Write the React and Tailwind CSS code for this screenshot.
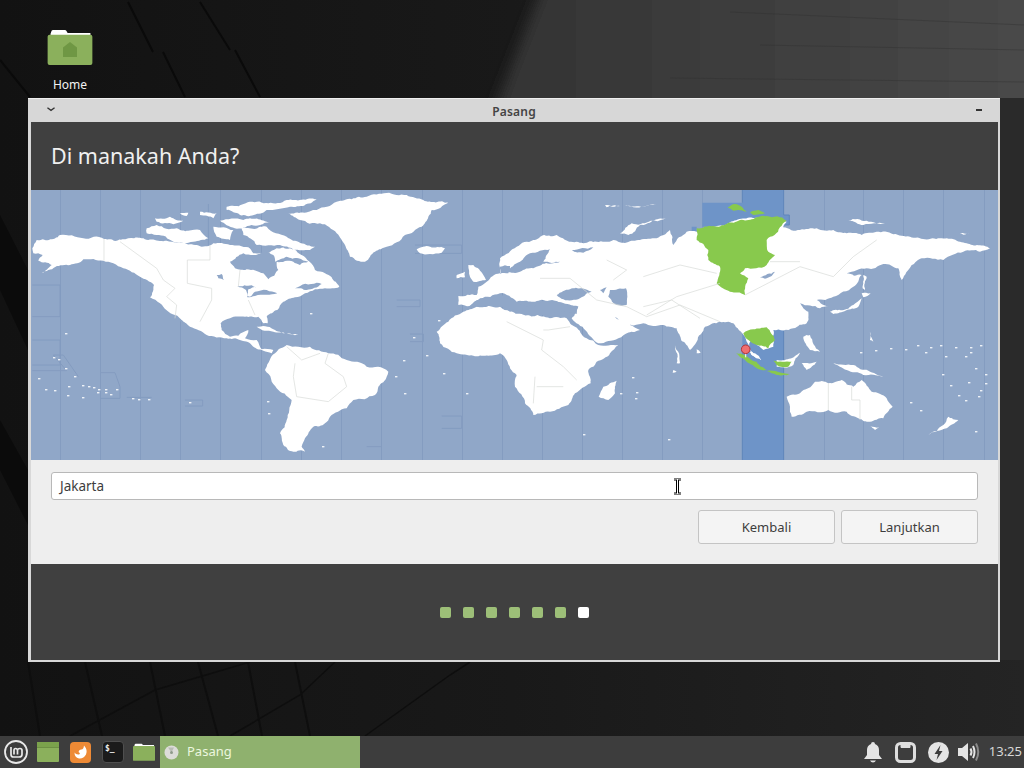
const font = { fontFamily: '"Noto Sans", "Open Sans", sans-serif' }

const TZ_LINES = [60, 100, 140, 180, 220, 261, 301, 341, 381, 422, 462, 502, 542, 582, 622, 662, 702, 824, 863, 903, 943, 984]

// island specks, map pixel coordinates
const SPECKS = [
  [65, 333], [53, 357], [58, 359], [65, 368], [74, 376], [38, 378], [45, 389], [54, 390], [68, 386], [67, 395],
  [82, 385], [88, 386], [93, 387], [98, 389], [105, 389], [116, 389], [97, 392], [105, 392], [82, 397], [110, 394],
  [132, 398], [138, 399], [148, 399], [189, 402], [267, 401], [268, 413], [322, 446], [403, 360], [426, 355], [395, 376],
  [404, 393], [466, 393], [443, 373], [413, 337], [310, 313], [438, 320], [632, 377], [636, 392], [635, 398], [620, 393],
  [583, 434], [668, 439], [917, 345], [930, 347], [940, 345], [955, 347], [970, 347], [980, 345], [965, 356], [970, 352],
  [860, 352], [875, 350], [890, 348], [905, 349], [925, 352], [945, 356], [942, 374], [950, 385], [958, 395], [965, 400],
  [975, 368], [985, 374], [978, 396], [950, 418], [985, 383], [968, 382], [980, 390], [920, 410], [910, 402], [975, 431],
]

// breaks the straight polygon edges up so the coastlines look natural
function rough(d) {
  let seed = 7
  const rand = () => {
    seed = (seed * 1103 + 12345) % 65536
    return seed / 65536 - 0.5
  }
  const split = (a, b, out) => {
    const dx = b[0] - a[0]
    const dy = b[1] - a[1]
    const len = Math.hypot(dx, dy)
    if (len < 9) {
      out.push(b)
      return
    }
    const k = rand() * 0.22
    const mid = [(a[0] + b[0]) / 2 - dy * k, (a[1] + b[1]) / 2 + dx * k]
    split(a, mid, out)
    split(mid, b, out)
  }
  return d.split('Z').filter(s => s.trim()).map(s => {
    const nums = s.match(/-?\d+(\.\d+)?/g).map(Number)
    const pts = []
    for (let i = 0; i < nums.length; i += 2) pts.push([nums[i], nums[i + 1]])
    const out = [pts[0]]
    pts.forEach((p, i) => split(p, pts[(i + 1) % pts.length], out))
    return 'M' + out.map(p => `${p[0].toFixed(1)} ${p[1].toFixed(1)}`).join('L') + 'Z'
  }).join('')
}

const AMERICAS = rough('M97 175L110 150L180 135L250 145L312 147L350 152L420 143L500 152L560 162L640 160L690 165L745 172L760 190L800 190L830 175L870 175L905 195L945 240L975 250L995 262L1018 290L975 295L945 298L915 310L885 322L850 335L832 360L800 380L803 400L790 400L775 380L735 380L690 385L662 400L665 420L690 440L715 437L745 420L735 445L770 450L785 478L820 480L815 490L790 482L755 465L720 450L680 445L620 435L570 410L525 375L480 340L450 322L462 285L420 260L370 235L340 220L310 212L250 208L210 225L125 250L155 225L115 212L128 195L100 190ZM800 530L830 485L860 465L930 470L985 490L1040 510L1100 530L1165 545L1160 560L1135 590L1125 615L1060 630L1040 655L990 680L975 700L940 710L915 745L905 770L915 785L880 785L850 765L840 730L860 690L875 630L830 595L795 540Z')
const AMERICAS_WATER = rough('M690 215L730 190L760 195L790 185L820 195L825 215L860 200L895 205L925 215L900 225L880 215L830 215L835 240L805 268L790 250L740 238L705 235ZM712 290L755 286L770 292L745 298L742 318L750 320L765 305L800 300L832 310L800 314L765 318L742 322L738 300ZM650 255L665 252L672 270L655 265ZM885 295L950 278L965 282L920 300ZM525 372L565 410L545 398Z')
const ARCTIC = rough('M440 115L470 105L530 115L600 120L625 145L580 155L520 155L470 135L440 130ZM465 85L510 80L550 92L520 103L470 95ZM600 65L650 70L640 85L600 75ZM680 50L750 35L860 30L950 28L870 50L800 60L720 75L680 60ZM660 92L730 90L810 97L780 105L680 106ZM725 115L800 110L860 140L945 170L930 180L880 180L840 165L770 165L730 135ZM640 110L700 120L690 150L650 140ZM540 70L565 68L560 78ZM865 70L950 60L1010 35L1100 20L1220 15L1270 30L1345 38L1295 60L1285 80L1265 110L1215 135L1160 170L1125 185L1095 215L1050 200L1035 165L1010 130L960 100L900 90ZM1250 178L1290 170L1335 175L1325 188L1290 192L1260 190ZM1405 225L1420 225L1450 255L1458 270L1420 275L1410 260ZM1370 255L1395 245L1395 262L1370 265ZM770 410L820 418L860 430L820 425ZM860 430L895 433L885 436Z')
const EURASIA = rough('M-125 318L-70 315L-65 290L-40 275L0 250L0 205L50 170L100 150L170 135L250 160L290 155L340 150L420 150L470 145L510 120L520 165L560 125L590 125L640 110L800 85L860 95L850 112L950 115L1000 120L1040 130L1130 125L1230 140L1320 145L1400 160L1470 175L1440 185L1390 185L1330 210L1265 205L1235 225L1205 270L1195 235L1150 222L1100 235L1040 250L1085 255L1060 290L1000 320L950 330L985 350L960 355L900 340L925 365L920 400L880 415L820 420L820 470L790 480L755 450L745 475L780 505L755 495L735 440L700 400L660 395L615 410L590 455L570 480L530 415L490 405L430 400L395 405L345 380L420 420L355 445L295 460L215 385L235 350L130 330L50 335L0 310L-60 325L-90 348L-125 345Z')
const AFRICA = rough('M-70 350L0 350L30 365L100 375L200 385L225 410L260 445L295 465L355 465L330 490L290 515L265 540L272 580L225 610L205 645L150 665L100 675L75 640L45 590L50 555L20 510L0 490L-80 497L-130 490L-180 460L-190 425L-155 395L-110 365Z')
const OLD_WORLD_WATER = rough('M-95 349L-60 327L0 312L50 337L100 352L130 332L165 332L235 350L230 372L130 375L60 370L0 350ZM90 190L150 178L130 215L180 215L100 235L60 245L20 245L60 215ZM0 230L30 228L25 250L0 252ZM170 315L210 298L280 305L240 325L190 328ZM330 300L378 295L380 345L350 345L325 320ZM215 180L280 172L250 188ZM300 300L320 292L310 310ZM780 262L825 245L815 258L795 266Z')
const ISLANDS = rough('M360 130L395 100L497 85L420 105L385 135ZM1045 93L1100 92L1155 100L1090 105ZM315 46L360 48L320 52ZM375 45L470 43L400 52ZM1090 255L1100 260L1095 300L1088 295ZM1085 310L1112 310L1090 322ZM990 365L1060 345L1085 325L1075 350L1000 372ZM910 440L930 435L960 485L930 480ZM830 510L900 488L880 525L830 530ZM905 520L950 515L920 540ZM1000 520L1060 525L1150 560L1090 555L1040 540ZM745 482L765 490L785 510L755 495ZM590 478L602 488L590 490ZM296 620L310 590L350 572L345 610L325 630ZM860 620L900 610L945 575L985 580L1025 570L1060 590L1085 570L1115 605L1160 625L1178 650L1150 685L1110 695L1075 685L1040 665L985 660L920 665L875 680L870 650ZM1110 708L1138 712L1125 720ZM1285 735L1330 705L1345 680L1375 690L1340 715ZM1380 130L1410 128L1390 134ZM525 465L540 520L530 520ZM520 540L530 545L518 548ZM1110 425L1120 455L1110 450Z')
const ZONE_LAND = rough('M590 115L640 108L720 90L800 78L860 92L840 112L800 150L805 185L825 195L800 225L735 235L720 250L745 265L735 315L690 305L650 280L660 230L625 210L625 180L590 150ZM683 52L705 42L725 50L740 65L700 62ZM750 68L775 60L795 70L760 75ZM730 430L760 418L800 412L825 450L805 475L770 465L745 450ZM708 490L735 495L770 515L800 540L775 537L740 515ZM800 543L835 546L870 552L830 555ZM820 512L875 515L865 530L830 525Z')

function WorldMap() {
  return (
    <svg className="block w-full h-[270px]" viewBox="31 190 967 270" preserveAspectRatio="none">
      <defs>
        <filter id="soft" x="-5%" y="-5%" width="110%" height="110%">
          <feGaussianBlur stdDeviation="1.1" />
        </filter>
      </defs>
      <rect x="31" y="190" width="967" height="270" fill="#90a7c8" />
      {TZ_LINES.map(x => <path key={x} d={`M${x + 0.5} 190V460`} stroke="#849cc0" strokeWidth="1" />)}
      <g transform="translate(0,190) scale(0.33333)" strokeLinejoin="round" filter="url(#soft)">
        <path fill="none" stroke="#849cc0" strokeWidth="3" d="M97 285H180V380H97M97 450H180V525H97M97 542H200L160 495H190L235 560M303 548H345L360 590V625H300M380 622H455M555 630H608V648H555M1100 770H1145M1190 330H1260V350H1190M1230 432H1270V455H1230M1325 678H1385V715H1325M1245 165H1385V190H1245M625 42V165" />
        <path fill="#fff" d={AMERICAS} />
        <path fill="#90a7c8" d={AMERICAS_WATER} />
        <path fill="#fff" d={ARCTIC} />
        <path fill="none" stroke="#d6d9d6" strokeWidth="2" d="M312 147V212M360 155L470 235L490 270L525 295L500 320L530 345L525 385M630 165V210H562V280L635 295V330L600 395M720 240L715 290M745 330L765 375M885 520L880 560L890 620L985 635L1040 590L1030 560L975 520L985 490M860 470L905 510L960 490" />
        <g transform="translate(1500,0)">
          <path fill="#6e94c8" d="M727 0H851V75H868V105H851V810H727V110H575V125H590V110H607V38H727Z" />
          <path fill="none" stroke="#5f86bb" strokeWidth="3" d="M727 38V0M851 0V75H868V105H851V810M727 810V480" />
          <path fill="#fff" d={EURASIA} />
          <path fill="#fff" d={AFRICA} />
          <path fill="#90a7c8" d={OLD_WORLD_WATER} />
          <path fill="#fff" d={ISLANDS} />
          <path fill="#88c94e" d={ZONE_LAND} />
          <path fill="none" stroke="#d6d9d6" strokeWidth="2" d="M20 395L130 450L125 480L190 530L230 570M130 420L145 420L210 410M105 560L100 640M110 590L190 590M120 265L210 265L290 330L380 350L440 380L540 345L660 395M320 210L380 240L340 270M430 260L540 225L650 250M440 375L530 320L660 280M735 315L900 230L1000 260L1060 200L1130 150M810 215L900 215M985 580V660M1055 590V630H1080V690M430 350L515 330L600 385" />
        </g>
      </g>
      <g transform="translate(745.7,349.3)">
        <path d="M0 4V8" stroke="#fff" strokeWidth="1" />
        <circle r="4.300" fill="#f06f70" stroke="#b5343a" strokeWidth="1" />
      </g>
      {SPECKS.map(([x, y]) => <rect key={`${x}-${y}`} x={x} y={y} width="2.4" height="1.4" fill="#fff" opacity="0.85" />)}
    </svg>
  )
}

function Wallpaper() {
  return (
    <svg className="absolute inset-0 w-[1024px] h-[768px]" viewBox="0 0 1024 768">
      <defs>
        <linearGradient id="wall" x1="0" y1="0" x2="1" y2="0">
          <stop offset="0" stopColor="#121212" />
          <stop offset="0.5" stopColor="#191919" />
          <stop offset="1" stopColor="#242424" />
        </linearGradient>
        <linearGradient id="glow" x1="0" y1="0" x2="1" y2="0">
          <stop offset="0" stopColor="#333333" />
          <stop offset="1" stopColor="#4a4a4a" />
        </linearGradient>
        <filter id="edge">
          <feGaussianBlur stdDeviation="7" />
        </filter>
      </defs>
      <rect width="1024" height="768" fill="url(#wall)" />
      <path d="M545 -20H1060V120H490Z" fill="url(#glow)" filter="url(#edge)" />
      <path d="M1000 98H1024V660H1000Z" fill="#2a2a2a" />
      <path d="M0 215L28 270V350L0 290ZM0 420L28 470V525L0 470Z" fill="#0b0b0b" />
      <g stroke="#0a0a0a" fill="none" strokeWidth="2">
        <path d="M128 2L153 52M163 52L185 97M200 2L230 50M235 50L260 97M0 60L30 97" />
      </g>
      <g stroke="#0e0e0e" fill="none" strokeWidth="2">
        <path d="M28 662L40 736M85 662L102 736M150 662L165 736M198 662L218 736M248 662L262 736M295 662L310 736" />
        <path d="M70 736L155 690L250 662M230 736L300 695L335 662M365 736L450 675L470 662" strokeWidth="1.500" />
      </g>
      <path d="M730 12L1024 25M760 45L1024 50M670 78L1024 82" stroke="#2f2f2f" strokeOpacity="0.4" fill="none" />
    </svg>
  )
}

function FolderIcon({ w, h }) {
  return (
    <svg width={w} height={h} viewBox="0 0 46 37">
      <path d="M3 5L4 2Q4 1 6 1H18Q19 1 20 3L20.5 4H44V8H3Z" fill="#fff" />
      <path d="M0 8Q0 6 2 6H44Q46 6 46 8V35Q46 37 44 37H2Q0 37 0 35Z" fill="#8bb05c" />
    </svg>
  )
}

function TaskbarIcons() {
  return (
    <div className="flex items-center h-full">
      <svg className="ml-[4px]" width="24" height="24" viewBox="0 0 24 24" fill="none" stroke="#e8e8e8">
        <circle cx="12" cy="12" r="11" strokeWidth="1.8" />
        <path d="M7 7V14.5Q7 17 9.5 17H15Q18 17 18 14.5V10.5Q18 8.5 16 8.5Q13.5 8.5 13.5 10.5V14.5M13.5 10.5Q13.5 8.5 11.5 8.5Q10 8.5 10 10.5V14.5" strokeWidth="1.7" />
      </svg>
      <svg className="ml-[9px]" width="22" height="20" viewBox="0 0 22 20">
        <rect width="22" height="20" rx="1" fill="#8bb05c" />
        <rect width="22" height="5" fill="#7ba24c" />
        <rect y="5" width="22" height="1" fill="#6d8f44" />
      </svg>
      <svg className="ml-[11px]" width="21" height="21" viewBox="0 0 21 21">
        <rect width="21" height="21" rx="4" fill="#ee8a35" />
        <path d="M14 3.500Q18 8 16 12.500Q13.500 17 9 16.500Q4.500 15.500 4.500 10.500Q6 13 9 12.500Q11 11.500 8.500 10Q9 7.500 11 7.500Q13.500 8 14 3.500Z" fill="#fff" />
      </svg>
      <div className="ml-[11px] w-[22px] h-[22px] rounded-[4px] bg-[#1b1b1b] border border-[#4f4f4f] text-[#eeeeee] text-[8px] leading-[13px] font-bold pl-[2px]" style={{ fontFamily: '"DejaVu Sans Mono", monospace' }}>
        $_
      </div>
      <div className="ml-[9px] flex">
        <FolderIcon w={22} h={20} />
      </div>
    </div>
  )
}

function Tray() {
  return (
    <div className="flex items-center h-full ml-auto">
      <svg width="20" height="22" viewBox="0 0 20 22" fill="#e4e4e4">
        <path d="M10 1Q12 1 12 3Q16 4.500 16 9V14L19 18H1L4 14V9Q4 4.500 8 3Q8 1 10 1Z" />
        <path d="M7 19.500H13Q12 21.500 10 21.500Q8 21.500 7 19.500Z" />
      </svg>
      <svg className="ml-[12px]" width="21" height="21" viewBox="0 0 21 21" fill="none" stroke="#dedede" strokeWidth="3">
        <rect x="1.500" y="1.500" width="18" height="18" rx="4" />
        <path d="M6 3H15V5.500H6Z" fill="#dedede" strokeWidth="1" />
      </svg>
      <svg className="ml-[12px]" width="21" height="21" viewBox="0 0 21 21">
        <circle cx="10.500" cy="10.500" r="10.500" fill="#e4e4e4" />
        <path d="M12.500 3L6.500 12H10L8.500 18L14.500 9H11Z" fill="#3d3d3d" />
      </svg>
      <svg className="ml-[8px]" width="24" height="22" viewBox="0 0 24 22" fill="none">
        <path d="M1 7H5L11 2V20L5 15H1Z" fill="#e4e4e4" />
        <path d="M13.500 7.500Q15.500 11 13.500 14.500M16 5Q19 11 16 17" stroke="#e4e4e4" strokeWidth="2" />
        <path d="M19 2.500Q23.500 11 19 19.500" stroke="#8a8a8a" strokeWidth="2" />
      </svg>
      <span className="ml-[8px] mr-[2px] text-[13px] text-[#d8d8d8]">13:25</span>
    </div>
  )
}

export default function App() {
  const dots = [0, 1, 2, 3, 4, 5]
  return (
    <div className="relative w-[1024px] h-[768px] overflow-hidden flex flex-col" style={font}>
      <Wallpaper />

      <div className="relative h-[98px] w-[80px] ml-[30px] pt-[29px] flex flex-col items-center">
        <div className="relative flex items-center justify-center">
          <FolderIcon w={46} h={36} />
          <svg className="absolute left-[16px] top-[13px]" width="14" height="15" viewBox="0 0 14 15">
            <path d="M7 0L14 5.500V15H0V5.500Z" fill="#6f9744" />
          </svg>
        </div>
        <span className="mt-[12px] text-[12px] leading-[16px] text-[#f2f2f2]">Home</span>
      </div>

      <div className="relative ml-[28px] w-[972px] h-[564px] bg-[#d8d8d8] flex flex-col pl-[3px] pb-[2px] pr-[2px]">
        <div className="relative h-[24px] flex items-center justify-center bg-[#d7d7d7] border-t border-[#efefef] -ml-[3px] -mr-[2px] pt-[2px]">
          <svg className="absolute left-[19px] top-[8px]" width="8" height="5" viewBox="0 0 9 5" fill="none" stroke="#333" strokeWidth="1.500">
            <path d="M0.500 0.500L4.500 3.500L8.500 0.500" />
          </svg>
          <span className="text-[12px] font-semibold text-[#444444] tracking-[0.2px]">Pasang</span>
          <div className="absolute right-[18px] top-[10px] w-[6px] h-[2px] bg-[#333333]" />
        </div>

        <div className="h-[68px] bg-[#404040] flex items-center pl-[20px]">
          <h1 className="text-[21.5px] text-[#f0f0f0]">Di manakah Anda?</h1>
        </div>

        <WorldMap />

        <div className="h-[104px] bg-[#eeeeee] px-[20px] pt-[12px] flex flex-col">
          <div className="relative h-[28px] rounded-[3px] bg-white border border-[#b8b8b8] flex items-center pl-[8px] pt-[1px]">
            <span className="text-[13.500px] text-[#3d3d3d]">Jakarta</span>
            <svg className="absolute left-[621px] top-[5px]" width="9" height="17" viewBox="0 0 9 17">
              <path d="M1 1H8M1 16H8M4.500 1V16" fill="none" stroke="#000" strokeWidth="3" />
              <path d="M1 1H8M1 16H8M4.500 1V16" fill="none" stroke="#fff" strokeWidth="1" />
            </svg>
          </div>
          <div className="mt-[10px] flex justify-end gap-[6px]">
            <button className="w-[137px] h-[34px] pt-[1px] rounded-[3px] bg-[#f4f4f4] border border-[#c4c4c4] text-[13px] text-[#3d3d3d]">Kembali</button>
            <button className="w-[137px] h-[34px] pt-[1px] rounded-[3px] bg-[#f4f4f4] border border-[#c4c4c4] text-[13px] text-[#3d3d3d]">Lanjutkan</button>
          </div>
        </div>

        <div className="flex-1 bg-[#404040] flex items-center justify-center gap-[12px]">
          {dots.map(d => <div key={d} className="w-[11px] h-[11px] rounded-[2px] bg-[#9dbf78]" />)}
          <div className="w-[11px] h-[11px] rounded-[2px] bg-white" />
        </div>
      </div>

      <div className="relative mt-auto h-[32px] bg-[#3d3d3d] flex items-center">
        <TaskbarIcons />
        <div className="ml-[5px] w-[200px] h-full bg-[#8fb16e] flex items-center pl-[4px]">
          <svg width="15" height="15" viewBox="0 0 15 15">
            <circle cx="7.500" cy="7.500" r="7" fill="#dcdcd8" />
            <path d="M7.500 7.500L4 2.500L10 2.500Z" fill="#b8bcb4" />
            <circle cx="7.500" cy="7.500" r="1.500" fill="#8f9a8a" />
          </svg>
          <span className="ml-[8px] text-[13px] text-[#ecf7df]">Pasang</span>
        </div>
        <Tray />
      </div>
    </div>
  )
}
